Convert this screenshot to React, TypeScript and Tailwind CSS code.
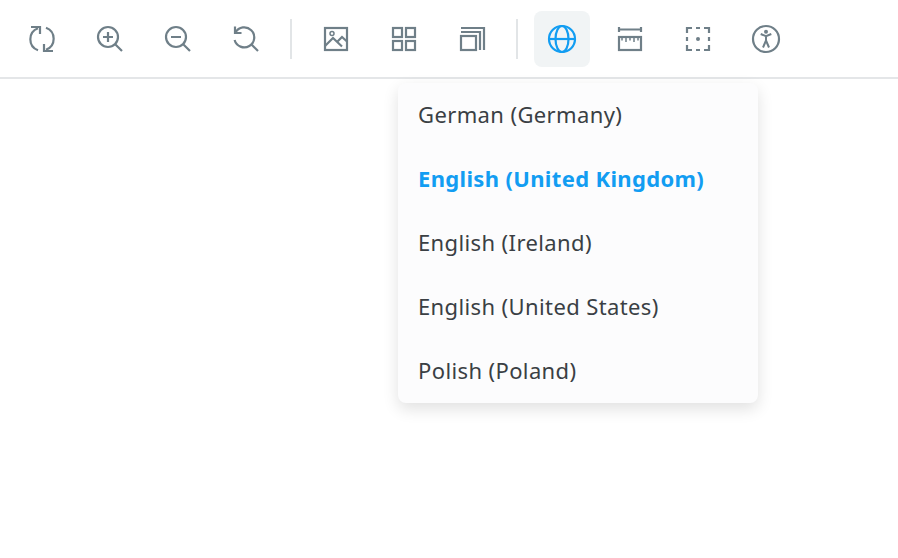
import type { ReactNode } from "react";

const locales = [
  "German (Germany)",
  "English (United Kingdom)",
  "English (Ireland)",
  "English (United States)",
  "Polish (Poland)",
];

function Icon({ children }: { children: ReactNode }) {
  return (
    <svg width="32" height="32" viewBox="0 0 32 32" fill="none" stroke="currentColor" strokeWidth="2.2">
      {children}
    </svg>
  );
}

function ToolButton({ active, children }: { active?: boolean; children: ReactNode }) {
  return (
    <button
      className={
        active
          ? "w-14 h-14 flex items-center justify-center rounded-lg bg-[#f1f4f5] text-[#129df2]"
          : "w-14 h-14 flex items-center justify-center rounded-lg text-[#6f7f88]"
      }
    >
      {children}
    </button>
  );
}

function Divider() {
  return <div className="w-0.5 h-10 mx-4 bg-[#e2e5e7]" />;
}

export default function App() {
  return (
    <div className="min-h-screen bg-white font-['Noto_Sans','Lato',sans-serif]">
      {/* Toolbar */}
      <div className="relative flex items-center h-[79px] pt-px pl-3.5 border-b-2 border-[#e4e6e8]">
        <div className="flex items-center gap-3">
          <ToolButton>
            <Icon>
              <path d="M12 5.2A11.8 11.8 0 0 0 12 27.3" />
              <path d="M20 26.8A11.8 11.8 0 0 0 20 4.7" />
              <path d="M5 4h9v7" />
              <path d="M27 28h-9v-7" />
            </Icon>
          </ToolButton>
          <ToolButton>
            <Icon>
              <circle cx="14" cy="14" r="10" />
              <path d="M21.2 21.2 28 28M14 9v10M9 14h10" />
            </Icon>
          </ToolButton>
          <ToolButton>
            <Icon>
              <circle cx="14" cy="14" r="10" />
              <path d="M21.2 21.2 28 28M9 14h10" />
            </Icon>
          </ToolButton>
          <ToolButton>
            <Icon>
              <path d="M5.5 9.5A10 10 0 1 1 4.6 17" />
              <path d="M5 3.5V10h6.5" />
              <path d="M21.2 21.2 28 28" />
            </Icon>
          </ToolButton>
        </div>
        <Divider />
        <div className="flex items-center gap-3">
          <ToolButton>
            <Icon>
              <rect x="5" y="5" width="22" height="22" />
              <circle cx="12" cy="10.5" r="2" strokeWidth="1.5" />
              <path d="M5 23l8-8 9 8.5M17 19l5-5 5 4.5" />
            </Icon>
          </ToolButton>
          <ToolButton>
            <Icon>
              <rect x="5" y="5" width="9" height="9" />
              <rect x="18" y="5" width="9" height="9" />
              <rect x="5" y="18" width="9" height="9" />
              <rect x="18" y="18" width="9" height="9" />
            </Icon>
          </ToolButton>
          <ToolButton>
            <Icon>
              <rect x="5" y="13" width="15" height="14" />
              <path d="M5 9h19v18M5 5h23v22" />
            </Icon>
          </ToolButton>
        </div>
        <Divider />
        <div className="flex items-center gap-3">
          <div className="relative">
            <ToolButton active>
              <Icon>
                <circle cx="16" cy="16" r="13" />
                <ellipse cx="16" cy="16" rx="6.5" ry="13" />
                <path d="M3 16h26" />
              </Icon>
            </ToolButton>

            {/* Locale menu */}
            <ul className="absolute left-[-136px] top-[72px] w-[360px] rounded-lg bg-[#fcfcfd] shadow-[0_6px_16px_rgba(0,0,0,0.12)] z-10">
              {locales.map((name, i) => (
                <li
                  key={name}
                  className={
                    i === 1
                      ? "h-16 px-5 pb-0.5 flex items-center whitespace-nowrap text-[22px] tracking-[0.34px] font-bold text-[#129df2]"
                      : "h-16 px-5 pb-0.5 flex items-center whitespace-nowrap text-[22px] tracking-[0.38px] text-[#3a3f44]"
                  }
                >
                  {name}
                </li>
              ))}
            </ul>
          </div>
          <ToolButton>
            <Icon>
              <path d="M5 6.5h22M5 4v5M27 4v5" />
              <rect x="5" y="14" width="22" height="13" />
              <path d="M8 14v3.5M12 14v5M16 14v3.5M20 14v5M24 14v3.5" strokeWidth="1.5" />
            </Icon>
          </ToolButton>
          <ToolButton>
            <Icon>
              <path d="M5 10V5h5M14 5h4M22 5h5v5M27 14v4M27 22v5h-5M18 27h-4M10 27H5v-5M5 18v-4" />
              <circle cx="16" cy="16" r="2" fill="currentColor" stroke="none" />
            </Icon>
          </ToolButton>
          <ToolButton>
            <Icon>
              <circle cx="16" cy="16" r="13" />
              <circle cx="16" cy="8.7" r="2" fill="currentColor" stroke="none" />
              <path d="M10.7 11 16 13.2l5.3-2.2M16 13v4.5M16 17.5l-3 7M16 17.5l3 7" strokeWidth="2" />
            </Icon>
          </ToolButton>
        </div>
      </div>
    </div>
  );
}
